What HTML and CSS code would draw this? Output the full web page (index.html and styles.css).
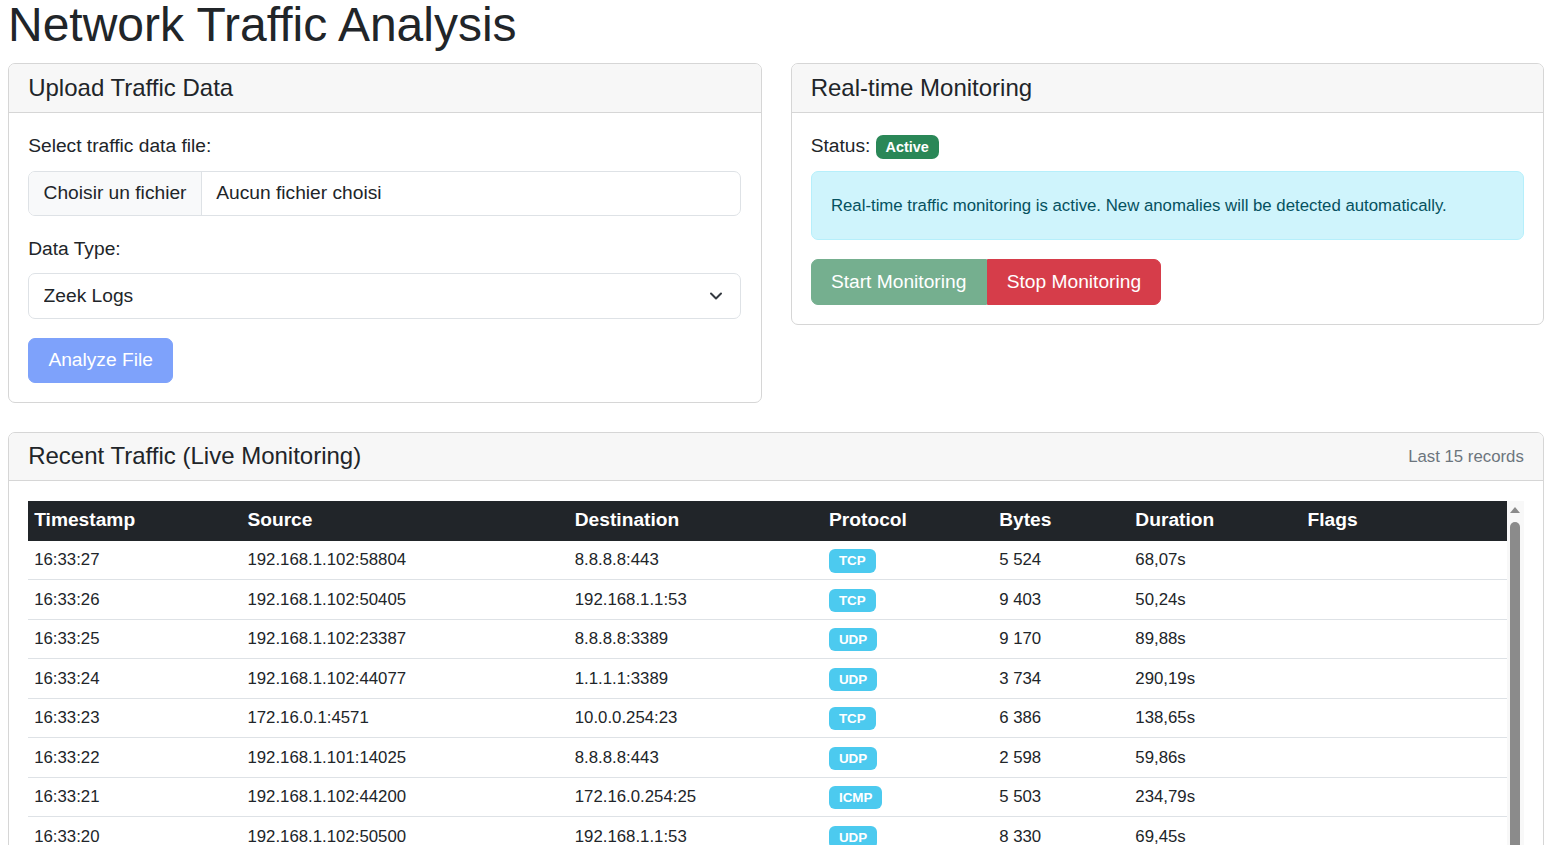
FILE: index.html
```html
<!DOCTYPE html>
<html lang="en">
<head>
<meta charset="utf-8">
<title>Network Traffic Analysis</title>
<link rel="stylesheet" href="styles.css">
</head>
<body>
<div class="page">
  <h1 class="title">Network Traffic Analysis</h1>

  <div class="top-row">
    <div class="card">
      <div class="card-header"><h5 class="card-title">Upload Traffic Data</h5></div>
      <div class="card-body">
        <div class="field">
          <label class="form-label">Select traffic data file:</label>
          <label class="file-input">
            <span class="file-btn">Choisir un fichier</span>
            <span class="file-name">Aucun fichier choisi</span>
          </label>
        </div>
        <div class="field">
          <label class="form-label" for="dtype">Data Type:</label>
          <div class="select-wrap">
            <select id="dtype" class="form-select">
              <option>Zeek Logs</option>
              <option>PCAP</option>
              <option>NetFlow</option>
            </select>
            <svg class="chevron" width="14" height="10" viewBox="0 0 14 10"><path d="M2 2.5l5 5 5-5" fill="none" stroke="#343a40" stroke-width="2" stroke-linecap="round" stroke-linejoin="round"/></svg>
          </div>
        </div>
        <button class="btn btn-primary-disabled">Analyze File</button>
      </div>
    </div>

    <div class="card">
      <div class="card-header"><h5 class="card-title">Real-time Monitoring</h5></div>
      <div class="card-body">
        <div class="status">Status: <span class="badge badge-success">Active</span></div>
        <div class="alert"><small>Real-time traffic monitoring is active. New anomalies will be detected automatically.</small></div>
        <div class="btn-group">
          <button class="btn btn-success-disabled">Start Monitoring</button><button class="btn btn-danger">Stop Monitoring</button>
        </div>
      </div>
    </div>
  </div>

  <div class="card">
    <div class="card-header header-flex">
      <h5 class="card-title">Recent Traffic (Live Monitoring)</h5>
      <small class="muted">Last 15 records</small>
    </div>
    <div class="card-body">
      <div class="table-wrap">
        <div class="table-scroll">
          <table class="traffic">
            <colgroup>
              <col class="c-time"><col class="c-src"><col class="c-dst"><col class="c-proto"><col class="c-bytes"><col class="c-dur"><col class="c-flags">
            </colgroup>
            <thead>
              <tr><th>Timestamp</th><th>Source</th><th>Destination</th><th>Protocol</th><th>Bytes</th><th>Duration</th><th>Flags</th></tr>
            </thead>
            <tbody>
              <tr><td>16:33:27</td><td>192.168.1.102:58804</td><td>8.8.8.8:443</td><td><span class="badge badge-info">TCP</span></td><td>5 524</td><td>68,07s</td><td></td></tr>
              <tr><td>16:33:26</td><td>192.168.1.102:50405</td><td>192.168.1.1:53</td><td><span class="badge badge-info">TCP</span></td><td>9 403</td><td>50,24s</td><td></td></tr>
              <tr><td>16:33:25</td><td>192.168.1.102:23387</td><td>8.8.8.8:3389</td><td><span class="badge badge-info">UDP</span></td><td>9 170</td><td>89,88s</td><td></td></tr>
              <tr><td>16:33:24</td><td>192.168.1.102:44077</td><td>1.1.1.1:3389</td><td><span class="badge badge-info">UDP</span></td><td>3 734</td><td>290,19s</td><td></td></tr>
              <tr><td>16:33:23</td><td>172.16.0.1:4571</td><td>10.0.0.254:23</td><td><span class="badge badge-info">TCP</span></td><td>6 386</td><td>138,65s</td><td></td></tr>
              <tr><td>16:33:22</td><td>192.168.1.101:14025</td><td>8.8.8.8:443</td><td><span class="badge badge-info">UDP</span></td><td>2 598</td><td>59,86s</td><td></td></tr>
              <tr><td>16:33:21</td><td>192.168.1.102:44200</td><td>172.16.0.254:25</td><td><span class="badge badge-info">ICMP</span></td><td>5 503</td><td>234,79s</td><td></td></tr>
              <tr><td>16:33:20</td><td>192.168.1.102:50500</td><td>192.168.1.1:53</td><td><span class="badge badge-info">UDP</span></td><td>8 330</td><td>69,45s</td><td></td></tr>
              <tr><td>16:33:19</td><td>192.168.1.101:33812</td><td>1.1.1.1:53</td><td><span class="badge badge-info">UDP</span></td><td>1 204</td><td>12,31s</td><td></td></tr>
              <tr><td>16:33:18</td><td>10.0.0.5:51234</td><td>8.8.8.8:443</td><td><span class="badge badge-info">TCP</span></td><td>7 812</td><td>145,02s</td><td></td></tr>
              <tr><td>16:33:17</td><td>192.168.1.102:40122</td><td>172.16.0.254:22</td><td><span class="badge badge-info">TCP</span></td><td>4 096</td><td>33,57s</td><td></td></tr>
              <tr><td>16:33:16</td><td>172.16.0.1:6021</td><td>192.168.1.1:80</td><td><span class="badge badge-info">TCP</span></td><td>3 150</td><td>77,90s</td><td></td></tr>
              <tr><td>16:33:15</td><td>192.168.1.101:29911</td><td>10.0.0.254:53</td><td><span class="badge badge-info">UDP</span></td><td>980</td><td>5,12s</td><td></td></tr>
              <tr><td>16:33:14</td><td>192.168.1.102:61002</td><td>8.8.4.4:443</td><td><span class="badge badge-info">ICMP</span></td><td>6 744</td><td>201,38s</td><td></td></tr>
              <tr><td>16:33:13</td><td>192.168.1.102:37750</td><td>1.1.1.1:443</td><td><span class="badge badge-info">TCP</span></td><td>2 215</td><td>41,66s</td><td></td></tr>
            </tbody>
          </table>
        </div>
        <div class="vscroll" aria-hidden="true">
          <span class="vscroll-up"></span>
          <span class="vscroll-thumb"></span>
        </div>
      </div>
    </div>
  </div>
</div>
</body>
</html>
```

FILE: styles.css
```css
* { box-sizing: border-box; }

html { overflow: hidden; }

body {
  margin: 0;
  font-family: "Liberation Sans", Arial, sans-serif;
  font-size: 19.2px;
  line-height: 1.5;
  color: #212529;
  background: #fff;
}

.page {
  padding: 0 1px 0 8px;
}

.title {
  font-size: 48px;
  font-weight: normal;
  line-height: 1.2;
  margin: -4px 0 9.6px;
}

.top-row {
  display: grid;
  grid-template-columns: 1fr 1fr;
  gap: 29px;
  align-items: start;
  margin-bottom: 28.6px;
}

.card {
  border: 1px solid #d6d6d6;
  border-radius: 7px;
  background: #fff;
  overflow: hidden;
}

.card-header {
  background: #f7f7f7;
  border-bottom: 1px solid #d6d6d6;
  padding: 9.5px 19.2px;
}

.header-flex {
  display: flex;
  justify-content: space-between;
  align-items: center;
}

.card-title {
  margin: 0;
  font-size: 24px;
  font-weight: normal;
  line-height: 1.2;
}

.muted {
  font-size: 16.8px;
  color: #6c757d;
}

.card-body {
  padding: 19.2px;
}

.field {
  margin-bottom: 19.2px;
}

.form-label {
  display: block;
  margin-bottom: 9.6px;
}

.file-input {
  display: flex;
  align-items: stretch;
  height: 45.2px;
  border: 1px solid #dee2e6;
  border-radius: 7px;
  overflow: hidden;
  cursor: pointer;
}

.file-btn {
  display: flex;
  align-items: center;
  background: #f8f9fa;
  border-right: 1px solid #dee2e6;
  padding: 0 14.4px;
}

.file-name {
  display: flex;
  align-items: center;
  padding: 0 14.4px;
}

.select-wrap {
  position: relative;
}

.form-select {
  display: block;
  width: 100%;
  height: 45.2px;
  padding: 0 40px 0 14.4px;
  font-family: inherit;
  font-size: 19.2px;
  color: #212529;
  background: #fff;
  border: 1px solid #dee2e6;
  border-radius: 7px;
  appearance: none;
  -webkit-appearance: none;
}

.chevron {
  position: absolute;
  right: 18px;
  top: 18px;
  pointer-events: none;
}

.btn {
  display: inline-block;
  padding: 7.2px 19.2px;
  font-family: inherit;
  font-size: 19.2px;
  line-height: 28.8px;
  color: #fff;
  border: 1px solid transparent;
  border-radius: 7px;
  cursor: pointer;
}

.btn-primary-disabled {
  background: #7ea2fb;
  border-color: #7ea2fb;
}

.btn-group {
  display: inline-flex;
}

.btn-group .btn:first-child {
  border-top-right-radius: 0;
  border-bottom-right-radius: 0;
}

.btn-group .btn:last-child {
  border-top-left-radius: 0;
  border-bottom-left-radius: 0;
}

.btn-success-disabled {
  background: #75af8f;
  border-color: #75af8f;
  padding-top: 7.6px;
  padding-bottom: 7.6px;
}

.btn-danger {
  background: #d63d4a;
  border-color: #d63d4a;
  padding-top: 7.6px;
  padding-bottom: 7.6px;
}

.status {
  height: 28.8px;
  margin-bottom: 9.6px;
}

.badge {
  display: inline-block;
  font-weight: bold;
  line-height: 1;
  color: #fff;
  white-space: nowrap;
  vertical-align: baseline;
}

.badge-success {
  background: #2a8757;
  font-size: 14.4px;
  padding: 4.8px 9.8px;
  border-radius: 7px;
}

.badge-info {
  background: #4ccaef;
  font-size: 13.4px;
  padding: 4.9px 9.9px;
  border-radius: 6px;
}

.alert {
  background: #cff4fc;
  border: 1px solid #b6effb;
  color: #055160;
  border-radius: 7px;
  padding: 19.2px;
  margin-bottom: 19.2px;
}

.alert small {
  font-size: 16.8px;
}

.table-wrap {
  display: flex;
  align-items: stretch;
  max-height: 480px;
}

.table-scroll {
  flex: 1;
  min-width: 0;
  overflow-y: auto;
  scrollbar-width: none;
}

.vscroll {
  flex: 0 0 17px;
  background: #f8f8f8;
  display: flex;
  flex-direction: column;
  align-items: center;
}

.vscroll-up {
  width: 0;
  height: 0;
  margin-top: 6px;
  border-left: 5px solid transparent;
  border-right: 5px solid transparent;
  border-bottom: 6px solid #8b8b8b;
}

.vscroll-thumb {
  width: 10px;
  height: 340px;
  margin-top: 9px;
  border-radius: 5px;
  background: #8b8b8b;
}

.traffic {
  width: 100%;
  border-collapse: collapse;
  table-layout: fixed;
}

.c-time { width: 213px; }
.c-src { width: 327px; }
.c-dst { width: 254px; }
.c-proto { width: 170px; }
.c-bytes { width: 136px; }
.c-dur { width: 172px; }
.c-flags { width: 205px; }

.traffic th {
  background: #212529;
  color: #fff;
  font-weight: bold;
  text-align: left;
  padding: 5.6px 6px;
  line-height: 28.8px;
  position: sticky;
  top: 0;
}

.traffic td {
  font-size: 16.8px;
  line-height: 25.2px;
  padding: 6.6px 6px;
  border-bottom: 1px solid #dee2e6;
  white-space: nowrap;
}
```
